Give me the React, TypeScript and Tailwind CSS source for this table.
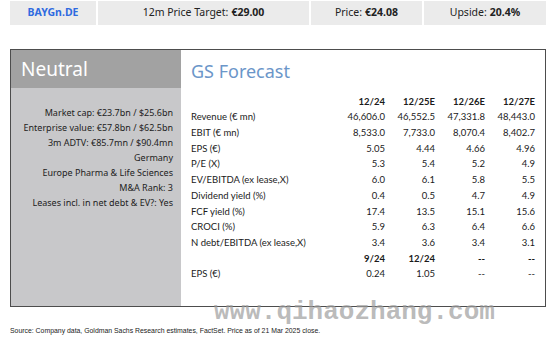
const summary = [
  'Market cap: €23.7bn / $25.6bn',
  'Enterprise value: €57.8bn / $62.5bn',
  '3m ADTV: €85.7mn / $90.4mn',
  'Germany',
  'Europe Pharma & Life Sciences',
  'M&A Rank: 3',
  'Leases incl. in net debt & EV?: Yes',
];

type Row = { label: string; values: string[]; bold?: boolean };

const rows: Row[] = [
  { label: '', values: ['12/24', '12/25E', '12/26E', '12/27E'], bold: true },
  { label: 'Revenue (€ mn)', values: ['46,606.0', '46,552.5', '47,331.8', '48,443.0'] },
  { label: 'EBIT (€ mn)', values: ['8,533.0', '7,733.0', '8,070.4', '8,402.7'] },
  { label: 'EPS (€)', values: ['5.05', '4.44', '4.66', '4.96'] },
  { label: 'P/E (X)', values: ['5.3', '5.4', '5.2', '4.9'] },
  { label: 'EV/EBITDA (ex lease,X)', values: ['6.0', '6.1', '5.8', '5.5'] },
  { label: 'Dividend yield (%)', values: ['0.4', '0.5', '4.7', '4.9'] },
  { label: 'FCF yield (%)', values: ['17.4', '13.5', '15.1', '15.6'] },
  { label: 'CROCI (%)', values: ['5.9', '6.3', '6.4', '6.6'] },
  { label: 'N debt/EBITDA (ex lease,X)', values: ['3.4', '3.6', '3.4', '3.1'] },
  { label: '', values: ['9/24', '12/24', '--', '--'], bold: true },
  { label: 'EPS (€)', values: ['0.24', '1.05', '--', '--'] },
];

function TopCell({ label, value, className }: { label: string; value: string; className: string }) {
  return (
    <div className={`flex items-center justify-center bg-[#ebebeb] text-[10.5px] text-[#222] ${className}`}>
      {label} <span className="ml-[3px] font-bold">{value}</span>
    </div>
  );
}

export default function App() {
  return (
    <div className="relative w-[550px] h-[342px] overflow-hidden bg-white font-['Noto_Sans',sans-serif]">
      <div className="ml-[10px] mt-[1px] flex h-[24px] w-[536px] gap-[2px]">
        <div className="flex w-[86px] items-center justify-center bg-[#ebebeb] text-[10.5px] font-bold text-[#2f6ae0]">
          BAYGn.DE
        </div>
        <TopCell label="12m Price Target:" value="€29.00" className="w-[211px]" />
        <TopCell label="Price:" value="€24.08" className="w-[111px]" />
        <TopCell label="Upside:" value="20.4%" className="flex-1" />
      </div>

      <div className="ml-[10px] mt-[24px] flex h-[258px] w-[536px] border-[1.5px] border-[#4d4d4d]">
        <div className="flex w-[170px] flex-col bg-[#c8c8ca]">
          <div className="flex h-[38px] items-center bg-[#a2a2a2] pl-[10px] text-[19px] text-white">
            Neutral
          </div>
          <div className="flex flex-col items-end pr-[8px] pt-[17px] text-[9px] leading-[15px] text-[#222]">
            {summary.map((s) => (
              <div key={s}>{s}</div>
            ))}
          </div>
        </div>

        <div className="flex-1 pl-[10px] pr-[10px] font-['Lato',sans-serif] text-[#1a1a1a]">
          <div className="pt-[10px] text-[18px] leading-[22px] text-[#6b96c9] font-['Noto_Sans',sans-serif]">
            GS Forecast
          </div>
          <div className="mt-[12px]">
            {rows.map((r, i) => (
              <div key={i} className="flex h-[15.7px] items-center text-[9.5px]">
                <div className="flex-1">{r.label}</div>
                {r.values.map((v, j) => (
                  <div key={j} className={`w-[50px] text-right ${r.bold ? 'font-bold' : ''}`}>
                    {v}
                  </div>
                ))}
              </div>
            ))}
          </div>
        </div>
      </div>

      <div className="ml-[10px] mt-[19px] w-[600px] origin-left scale-x-[0.86] text-[8px] leading-[10px] text-[#222] font-['Liberation_Sans',sans-serif]">
        Source: Company data, Goldman Sachs Research estimates, FactSet. Price as of 21 Mar 2025 close.
      </div>

      <div className="absolute left-[214px] top-[296px] text-[26px] font-bold leading-[32px] text-[#9d9d9d]/70 font-['Liberation_Mono',monospace]">
        www.qihaozhang.com
      </div>
    </div>
  );
}
